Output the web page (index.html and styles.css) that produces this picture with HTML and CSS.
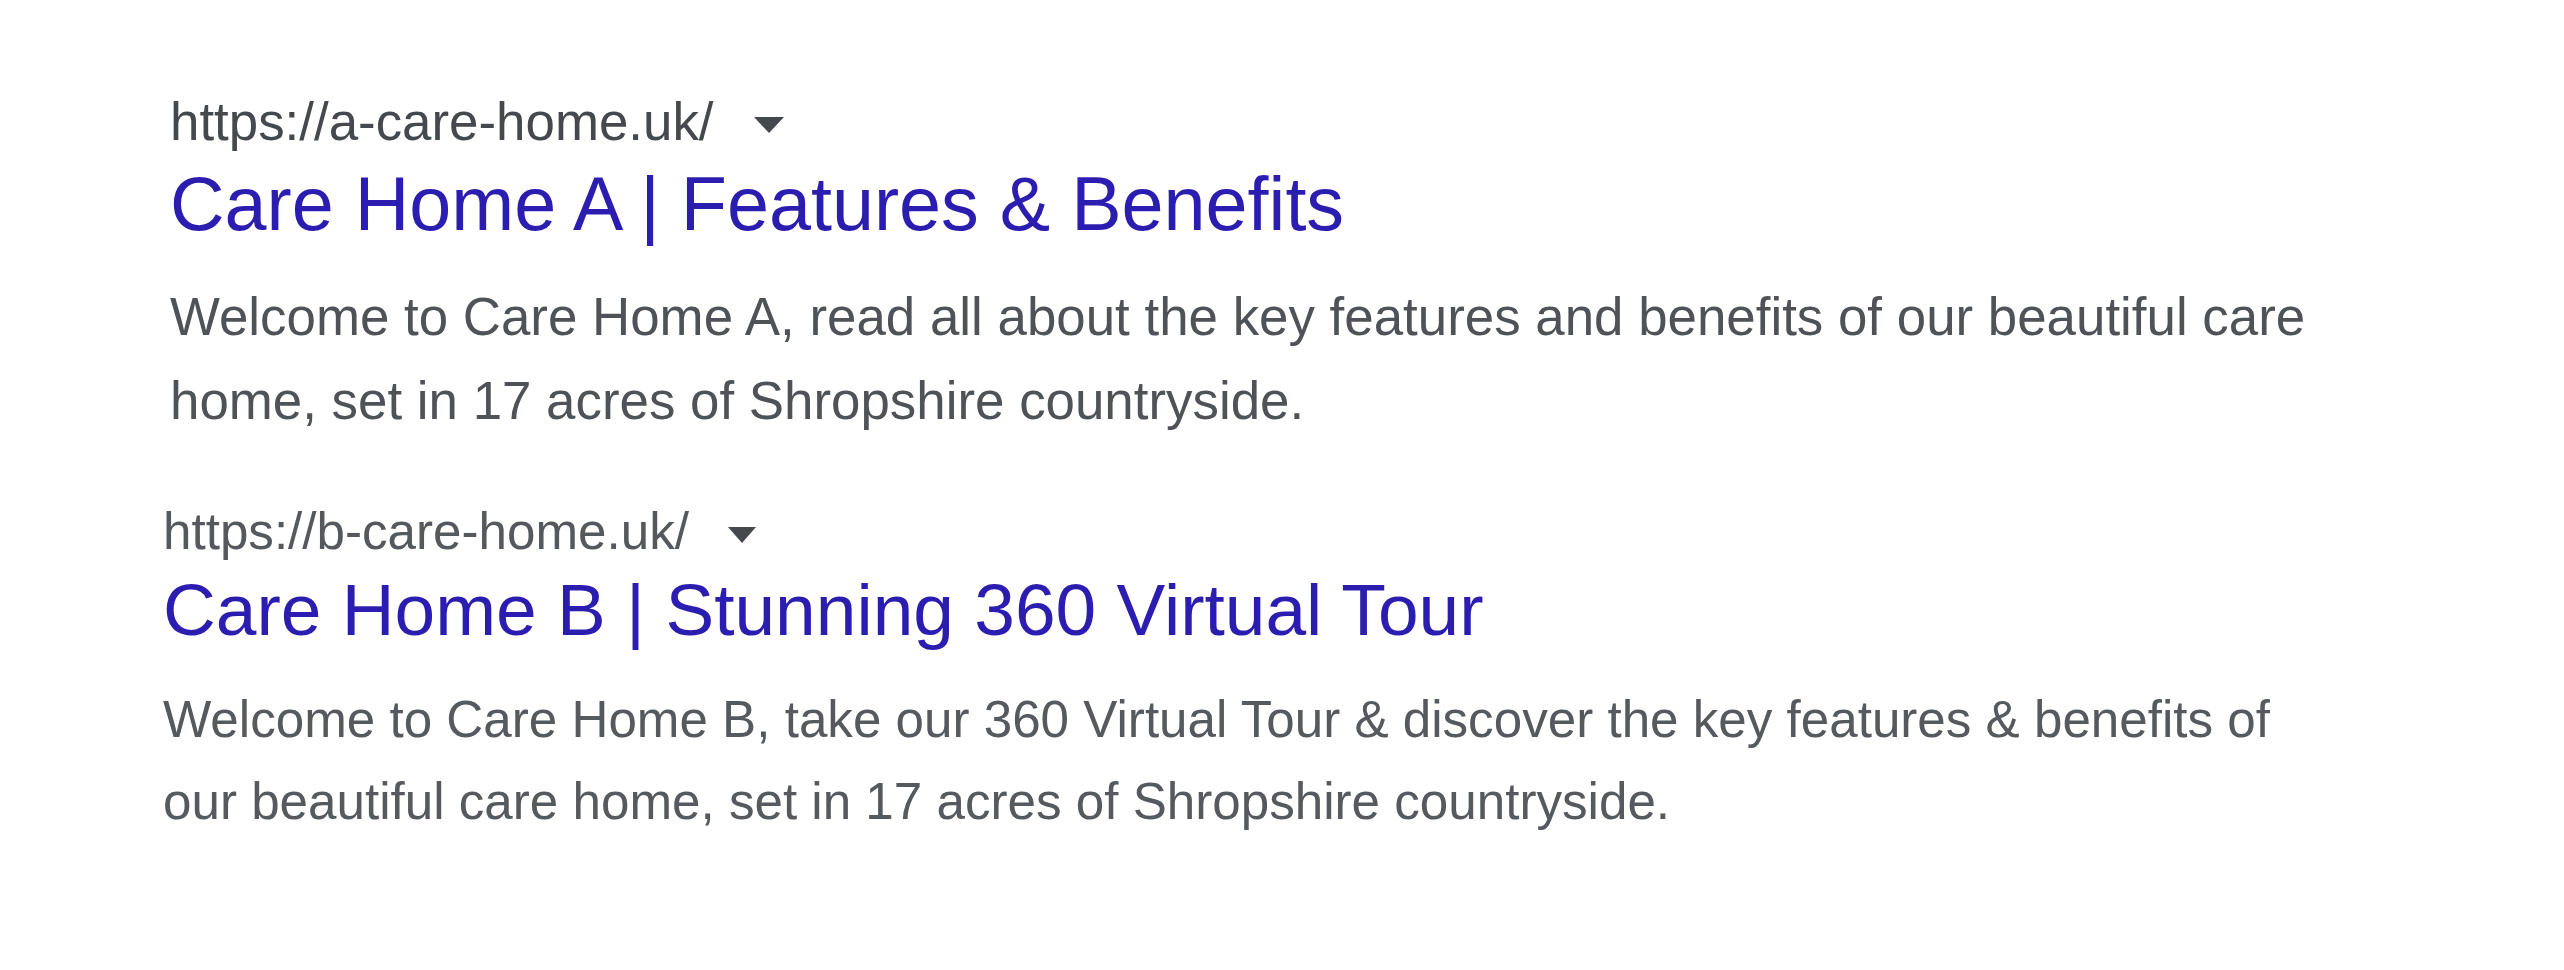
FILE: index.html
```html
<!DOCTYPE html>
<html lang="en">
<head>
<meta charset="utf-8">
<title>Search results</title>
<link rel="stylesheet" href="styles.css">
</head>
<body>
<main class="results">
  <div class="result result-a">
    <div class="url-row">
      <cite class="url">https://a-care-home.uk/</cite>
      <span class="caret"></span>
    </div>
    <h3 class="title">Care Home A | Features &amp; Benefits</h3>
    <p class="snippet">Welcome to Care Home A, read all about the key features and benefits of our beautiful care home, set in 17 acres of Shropshire countryside.</p>
  </div>
  <div class="result result-b">
    <div class="url-row">
      <cite class="url">https://b-care-home.uk/</cite>
      <span class="caret"></span>
    </div>
    <h3 class="title">Care Home B | Stunning 360 Virtual Tour</h3>
    <p class="snippet">Welcome to Care Home B, take our 360 Virtual Tour &amp; discover the key features &amp; benefits of our beautiful care home, set in 17 acres of Shropshire countryside.</p>
  </div>
</main>
</body>
</html>
```

FILE: styles.css
```css
html, body {
  margin: 0;
  padding: 0;
  background: #ffffff;
}

body {
  font-family: "Liberation Sans", Arial, sans-serif;
  width: 2564px;
  height: 970px;
  overflow: hidden;
}

.results {
  display: flex;
  flex-direction: column;
  gap: 56px;
  padding-top: 88px;
}

.result {
  --s: 3.75;
  --f: 3.775;
  --lh: 22.4px;
  display: flex;
  flex-direction: column;
  width: calc(600px * var(--s));
}

.result-a {
  --s: 3.75;
  --f: 3.777;
  --lh: 22.4px;
  margin-left: 170px;
}

.result-b {
  --s: 3.6;
  --f: 3.655;
  --lh: 22.8px;
  margin-left: 163px;
}

.result-a .url { color: #45484d; }
.result-b .url { color: #55585c; }

.url-row {
  display: flex;
  align-items: center;
  height: calc(18.2px * var(--s));
}

.url {
  font-style: normal;
  font-size: calc(14px * var(--f));
  line-height: calc(18.2px * var(--s));
}

.caret {
  width: 0;
  height: 0;
  margin-left: calc(10.8px * var(--s));
  margin-top: calc(1.5px * var(--s));
  border-left: calc(4.1px * var(--s)) solid transparent;
  border-right: calc(4.1px * var(--s)) solid transparent;
  border-top: calc(4.5px * var(--s)) solid #45484d;
}

.title {
  margin: calc(0.7px * var(--s)) 0 0 0;
  font-weight: normal;
  font-size: calc(20px * var(--f));
  line-height: calc(24px * var(--s));
  color: #2a1db0;
  white-space: nowrap;
}

.snippet {
  margin: calc(7px * var(--s)) 0 0 0;
  font-size: calc(14px * var(--f));
  line-height: calc(var(--lh) * var(--s));
  color: #4f5357;
}

.result-b .snippet { color: #56595d; }
```
